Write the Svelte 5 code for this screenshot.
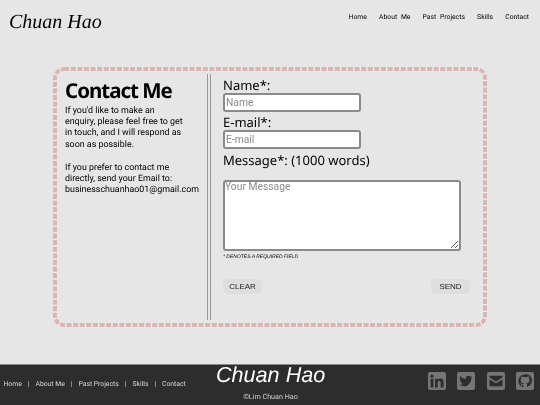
<script>
  const nav = ['Home', 'About Me', 'Past Projects', 'Skills', 'Contact'];
</script>

<div class="page">
  <header class="top">
    <div class="brand">Chuan Hao</div>
    <nav class="topnav">
      {#each nav as item}<a href="#top">{item}</a>{/each}
    </nav>
  </header>

  <main class="mainarea">
    <section class="card">
      <svg class="dashes" viewBox="0 0 434 260" aria-hidden="true">
        <rect x="2" y="2" width="430" height="256" rx="9" class="under" />
        <rect x="2" y="2" width="430" height="256" rx="9" class="over" />
      </svg>
      <div class="info">
        <h1>Contact Me</h1>
        <p>If you'd like to make an enquiry, please feel free to get in touch, and I will respond as soon as possible.</p>
        <p class="second">If you prefer to contact me directly, send your Email to: businesschuanhao01@gmail.com</p>
      </div>
      <form class="form">
        <label for="n">Name*:</label>
        <input id="n" class="field" placeholder="Name" />
        <label for="e" class="l2">E-mail*:</label>
        <input id="e" class="field" placeholder="E-mail" />
        <label for="m" class="l3">Message*: (1000 words)</label>
        <textarea id="m" placeholder="Your Message"></textarea>
        <div class="note">* DENOTES A REQUIRED FIELD</div>
        <div class="buttons">
          <button type="button">CLEAR</button>
          <button type="button">SEND</button>
        </div>
      </form>
    </section>
  </main>

  <footer class="foot">
    <nav class="footnav">
      {#each nav as item, i}
        {#if i > 0}<span class="sep">|</span>{/if}<a href="#top">{item}</a>
      {/each}
    </nav>
    <div class="center">
      <div class="fbrand">Chuan Hao</div>
      <div class="copy">©Lim Chuan Hao</div>
    </div>
    <div class="icons">
      <svg viewBox="0 0 18 18" aria-label="LinkedIn">
        <rect width="18" height="18" rx="2" class="ic" />
        <rect x="2.6" y="6.8" width="2.8" height="8.6" class="cut" />
        <circle cx="4" cy="4.2" r="1.6" class="cut" />
        <path class="cut" d="M7 6.8h2.7V8c.5-.8 1.5-1.4 2.8-1.4 2.4 0 3 1.6 3 3.8v5h-2.8v-4.4c0-1.1-.2-2-1.4-2s-1.600.9-1.600 2v4.400H7z" />
      </svg>
      <svg viewBox="0 0 18 18" aria-label="Twitter">
        <rect width="18" height="18" rx="2" class="ic" />
        <path class="cut" d="M15.400 5.200c-.5.2-1 .4-1.500.4.5-.3 1-.8 1.200-1.500-.5.3-1.100.5-1.700.6a2.600 2.600 0 0 0-4.500 2.400C6.300 6.700 4.400 5.700 3.100 4.100c-.7 1.200-.3 2.700.8 3.500-.4 0-.8-.1-1.200-.3 0 1.300.9 2.400 2.100 2.600-.4.100-.8.100-1.200 0 .3 1 1.300 1.800 2.500 1.800-1.100.9-2.500 1.300-3.900 1.100 3 1.900 6.500 1.900 9.100-.1 2.200-1.700 3.100-4.200 3-6.500.5-.3 1-.8 1.300-1.200z" />
      </svg>
      <svg viewBox="0 0 18 18" aria-label="Email">
        <rect width="18" height="18" rx="2" class="ic" />
        <path class="cut" d="M2.500 3.800h13v1.600L9 9.600 2.500 5.400z" />
        <path class="cut" d="M2.500 7.200 9 11.400l6.500-4.200v7H2.500z" />
      </svg>
      <svg viewBox="0 0 18 18" aria-label="GitHub">
        <rect width="18" height="18" rx="2" class="ic" />
        <path class="cut" d="M9 2.400c-3.700 0-6.600 2.900-6.600 6.500 0 2.900 1.900 5.400 4.500 6.300.3 0 .5-.1.500-.4v-1.300c-1.800.4-2.200-.7-2.300-1.100-.1-.2-.4-.8-.7-1-.2-.1-.6-.4 0-.4.500 0 .9.500 1 .7.600 1 1.500.7 1.900.5.100-.4.300-.7.400-.9-1.500-.2-3-.7-3-3.200 0-.7.300-1.300.7-1.800-.1-.2-.3-.8.100-1.700 0 0 .6-.2 1.900.7a6.500 6.500 0 0 1 3.400 0c1.300-.9 1.900-.7 1.900-.7.400.9.200 1.500.1 1.700.4.500.7 1.100.7 1.800 0 2.500-1.500 3-3 3.200.3.200.5.600.5 1.300v1.900c0 .3.200.5.500.4 2.600-.9 4.500-3.400 4.500-6.300 0-3.600-2.900-6.500-6.600-6.500z" />
      </svg>
    </div>
  </footer>
</div>

<style>
  :global(body) {
    margin: 0;
    background: #e6e6e6;
  }
  .page {
    width: 540px;
    height: 405px;
    display: flex;
    flex-direction: column;
    overflow: hidden;
    color: #000;
    font-family: Roboto, sans-serif;
    will-change: transform;
    text-rendering: geometricPrecision;
  }
  .top {
    height: 67px;
    flex: none;
    display: flex;
    justify-content: space-between;
    align-items: flex-start;
    padding: 0 11px 0 9px;
    box-sizing: border-box;
  }
  .brand {
    font: italic 20px/24px "Liberation Serif", serif;
    margin-top: 9.500px;
  }
  .topnav {
    display: flex;
    gap: 12.200px;
    margin-top: 12px;
    font-size: 6.800px;
    line-height: 10px;
    word-spacing: 2px;
  }
  a {
    color: inherit;
    text-decoration: none;
  }
  .mainarea {
    flex: 1;
    min-height: 0;
    padding-left: 53px;
  }
  .card {
    position: relative;
    width: 434px;
    height: 260px;
    box-sizing: border-box;
    display: flex;
    padding: 7px 0 7px 12px;
  }
  .dashes {
    position: absolute;
    left: 0;
    top: 0;
    width: 434px;
    height: 260px;
    fill: none;
    stroke-width: 4;
  }
  .under {
    stroke: #f2efef;
  }
  .over {
    stroke: #dbb4b4;
    stroke-dasharray: 5.300 1.300;
  }
  .info {
    width: 146px;
    flex: none;
    box-sizing: border-box;
    border-right: 4px double #9a9a9a;
    padding-right: 6px;
  }
  h1 {
    margin: 5px 0 0;
    font: 700 20.500px/25px "Noto Sans", sans-serif;
    letter-spacing: -1px;
    white-space: nowrap;
  }
  p {
    margin: 0;
    font-size: 8.900px;
    line-height: 11.400px;
    width: 122px;
  }
  h1 + p {
    margin-top: 1.500px;
  }
  .second {
    margin-top: 11.400px;
    width: 136px;
  }
  .form {
    margin-left: 12px;
    width: 247px;
    display: flex;
    flex-direction: column;
    align-items: flex-start;
    font-family: "Noto Sans", sans-serif;
  }
  label {
    font-size: 13px;
    line-height: 15px;
    display: block;
    margin-top: 4px;
  }
  .l2 {
    margin-top: 3px;
  }
  .l3 {
    margin-top: 3px;
    margin-bottom: 12px;
    line-height: 16px;
  }
  .field,
  textarea {
    box-sizing: border-box;
    background: #fff;
    border: 2px solid #8a8a8a;
    border-radius: 3px;
    font: 10.300px Roboto, sans-serif;
    padding: 0 1px;
    margin: 0;
    outline: none;
  }
  .field {
    width: 138px;
    height: 19px;
  }
  textarea {
    width: 238px;
    height: 71px;
    padding: 0;
    line-height: 10px;
    resize: vertical;
  }
  ::placeholder {
    color: #8a8a8a;
    opacity: 1;
  }
  .note {
    margin-top: 1.500px;
    font: italic 5px/8px "Liberation Sans", sans-serif;
  }
  .buttons {
    margin-top: 18.500px;
    width: 247px;
    display: flex;
    justify-content: space-between;
  }
  button {
    width: 39px;
    height: 15px;
    border: 0;
    border-radius: 5px;
    padding: 0;
    background: #dedede;
    color: #222;
    font: 8px "Liberation Sans", sans-serif;
  }
  .foot {
    height: 41px;
    flex: none;
    box-sizing: border-box;
    border-top: 1px solid #8a8a8a;
    background: #2d2d2d;
    color: #d8d8d8;
    display: flex;
    position: relative;
  }
  .footnav {
    margin: 14px 0 0 3.500px;
    font-size: 6.800px;
    line-height: 10px;
    white-space: nowrap;
  }
  .sep {
    margin: 0 6px;
  }
  .center {
    position: absolute;
    left: 216px;
    top: 0;
    width: 109px;
    text-align: center;
  }
  .fbrand {
    font: italic 21.600px/24px "Liberation Sans", sans-serif;
    color: #fff;
    margin-top: -2px;
    white-space: nowrap;
  }
  .copy {
    font-size: 7.200px;
    line-height: 10px;
    margin-top: 4.500px;
    color: #cfcfcf;
  }
  .icons {
    margin-left: auto;
    margin-right: 6px;
    margin-top: 7px;
    display: flex;
    gap: 11.500px;
    align-items: flex-start;
  }
  .icons svg {
    width: 18px;
    height: 18px;
    display: block;
  }
  .ic {
    fill: #757575;
  }
  .cut {
    fill: #2d2d2d;
  }
</style>
